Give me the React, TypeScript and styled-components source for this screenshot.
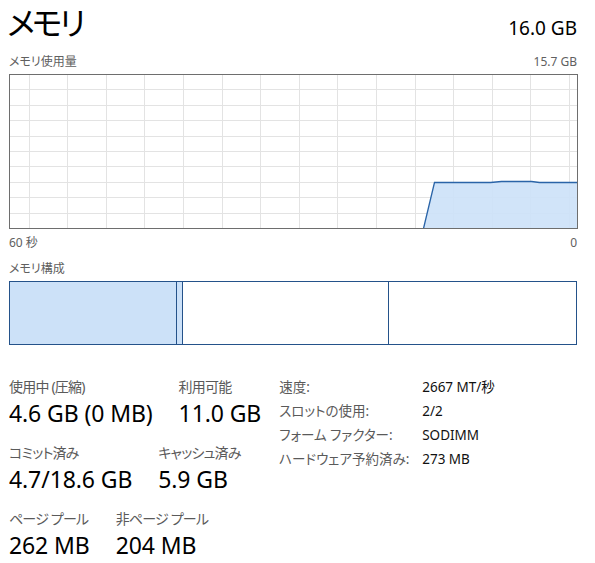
import styled, { createGlobalStyle } from "styled-components";

const GlobalStyle = createGlobalStyle`
  body {
    margin: 0;
    background: #ffffff;
    font-family: "Noto Sans", "Noto Sans CJK JP", sans-serif;
    font-feature-settings: "palt";
    color: #000;
  }
`;

const Page = styled.div`
  width: 568px;
  padding: 0 18px 0 9px;
  display: flex;
  flex-direction: column;
`;

const Header = styled.div`
  display: flex;
  justify-content: space-between;
  align-items: baseline;
  height: 48px;
`;

const Title = styled.h1`
  margin: 0;
  margin-left: -2px;
  font-size: 32px;
  font-weight: 400;
  line-height: 46px;
  letter-spacing: -3px;
`;

const Total = styled.div`
  font-size: 19px;
  line-height: 24px;
`;

const CaptionRow = styled.div<{ $h?: number }>`
  display: flex;
  justify-content: space-between;
  align-items: center;
  height: ${(p) => p.$h ?? 26}px;
  font-size: 12px;
  color: #606060;
`;

const Chart = styled.svg`
  display: block;
`;

const CompBar = styled.div`
  display: flex;
  height: 64px;
  border: 1px solid #24528a;
  box-sizing: border-box;
`;

const Segment = styled.div<{ $w: number; $filled?: boolean; $last?: boolean }>`
  flex: 0 0 ${(p) => p.$w}px;
  background: ${(p) => (p.$filled ? "#cce1f8" : "#fff")};
  border-right: ${(p) => (p.$last ? "none" : "1px solid #24528a")};
  box-sizing: border-box;
`;

const Stats = styled.div`
  display: flex;
  gap: 18px;
  margin-top: 33px;
`;

const LeftStats = styled.div`
  display: flex;
  flex-direction: column;
`;

const StatRow = styled.div`
  display: flex;
  gap: 26px;
  height: 66px;
`;

const Stat = styled.div`
  display: flex;
  flex-direction: column;
`;

const StatLabel = styled.div`
  font-size: 14px;
  line-height: 18px;
  letter-spacing: -0.8px;
  color: #5a5a5a;
`;

const StatValue = styled.div`
  font-size: 23px;
  line-height: 35px;
  letter-spacing: -0.1px;
`;

const InfoGrid = styled.div`
  display: grid;
  grid-template-columns: 143px auto;
  grid-auto-rows: 24px;
  font-size: 13.5px;
  line-height: 18px;
`;

const InfoKey = styled.div`
  color: #5a5a5a;
`;

const InfoVal = styled.div`
  color: #111;
`;

const W = 568;
const H = 154;

function UsageChart() {
  const vLines = Array.from({ length: 15 }, (_, i) => 19.5 + i * 38.6);
  const hLines = Array.from({ length: 9 }, (_, i) => 15.4 * (i + 1));
  const pts = [
    [414, H],
    [425, 108],
    [481, 108],
    [492, 107],
    [522, 107],
    [530, 108],
    [W, 108],
    [W, H],
  ];
  const poly = pts.map((p) => `${p[0] + 0.5},${p[1] + 0.5}`).join(" ");
  const line = pts
    .slice(0, 7)
    .map((p) => `${p[0] + 0.5},${p[1] + 0.5}`)
    .join(" ");
  return (
    <Chart width={W + 1} height={H + 1}>
      {vLines.map((x) => (
        <line key={"v" + x} x1={Math.round(x) + 0.5} y1={0} x2={Math.round(x) + 0.5} y2={H} stroke="#e3e3e3" />
      ))}
      {hLines.map((y) => (
        <line key={"h" + y} x1={0} y1={Math.round(y) + 0.5} x2={W} y2={Math.round(y) + 0.5} stroke="#e3e3e3" />
      ))}
      <polygon points={poly} fill="#cce1f8" fillOpacity={0.9} />
      <polyline points={line} fill="none" stroke="#2a64a8" strokeWidth={1.3} />
      <rect x={0.5} y={0.5} width={W} height={H} fill="none" stroke="#6e6e6e" />
    </Chart>
  );
}

export default function App() {
  return (
    <Page>
      <GlobalStyle />
      <Header>
        <Title>メモリ</Title>
        <Total>16.0 GB</Total>
      </Header>
      <CaptionRow>
        <span>メモリ使用量</span>
        <span>15.7 GB</span>
      </CaptionRow>
      <UsageChart />
      <CaptionRow>
        <span>60 秒</span>
        <span>0</span>
      </CaptionRow>
      <CaptionRow>
        <span>メモリ構成</span>
      </CaptionRow>
      <CompBar>
        <Segment $w={167} $filled />
        <Segment $w={6} $filled />
        <Segment $w={206} />
        <Segment $w={187} $last />
      </CompBar>
      <Stats>
        <LeftStats>
          <StatRow>
            <Stat>
              <StatLabel>使用中 (圧縮)</StatLabel>
              <StatValue>4.6 GB (0 MB)</StatValue>
            </Stat>
            <Stat>
              <StatLabel>利用可能</StatLabel>
              <StatValue>11.0 GB</StatValue>
            </Stat>
          </StatRow>
          <StatRow>
            <Stat>
              <StatLabel>コミット済み</StatLabel>
              <StatValue>4.7/18.6 GB</StatValue>
            </Stat>
            <Stat>
              <StatLabel>キャッシュ済み</StatLabel>
              <StatValue>5.9 GB</StatValue>
            </Stat>
          </StatRow>
          <StatRow>
            <Stat>
              <StatLabel>ページ プール</StatLabel>
              <StatValue>262 MB</StatValue>
            </Stat>
            <Stat>
              <StatLabel>非ページ プール</StatLabel>
              <StatValue>204 MB</StatValue>
            </Stat>
          </StatRow>
        </LeftStats>
        <InfoGrid>
          <InfoKey>速度:</InfoKey>
          <InfoVal>2667 MT/秒</InfoVal>
          <InfoKey>スロットの使用:</InfoKey>
          <InfoVal>2/2</InfoVal>
          <InfoKey>フォーム ファクター:</InfoKey>
          <InfoVal>SODIMM</InfoVal>
          <InfoKey>ハードウェア予約済み:</InfoKey>
          <InfoVal>273 MB</InfoVal>
        </InfoGrid>
      </Stats>
    </Page>
  );
}
